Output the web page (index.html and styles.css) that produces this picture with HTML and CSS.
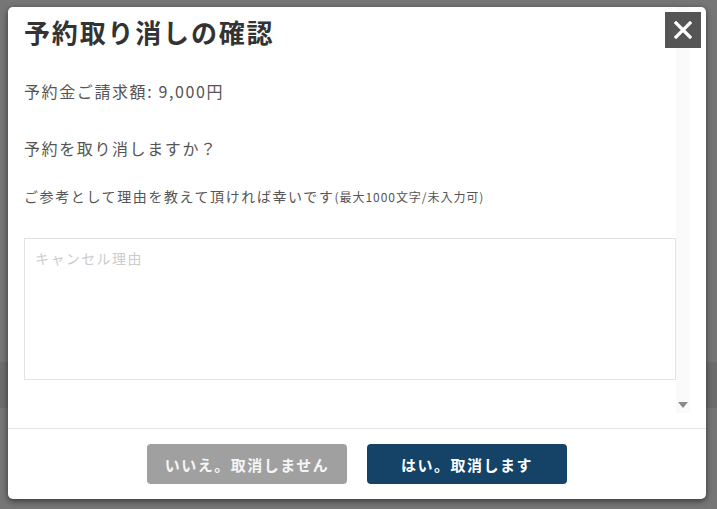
FILE: index.html
```html
<!DOCTYPE html>
<html lang="ja">
<head>
<meta charset="utf-8">
<title>予約取り消しの確認</title>
<link rel="stylesheet" href="styles.css">
</head>
<body>
<div class="page">
  <div class="band"></div>
</div>
<div class="modal">
  <div class="body">
    <div class="scroll">
      <div class="content">
        <h2 class="title">予約取り消しの確認</h2>
        <p class="amount">予約金ご請求額: 9,000円</p>
        <p class="question">予約を取り消しますか？</p>
        <p class="note">ご参考として理由を教えて頂ければ幸いです<span class="small">(最大1000文字/未入力可)</span></p>
        <textarea class="reason" placeholder="キャンセル理由"></textarea>
      </div>
      <div class="bar"><span class="arrow"></span></div>
    </div>
  </div>
  <div class="footer">
    <button class="btn btn-no">いいえ。取消しません</button>
    <button class="btn btn-yes">はい。取消します</button>
  </div>
  <button class="close" aria-label="閉じる">
    <svg width="18" height="18" viewBox="0 0 18 18"><path d="M2 2 L16 16 M16 2 L2 16" stroke="#fff" stroke-width="3.2" stroke-linecap="square"/></svg>
  </button>
</div>
</body>
</html>
```

FILE: styles.css
```css
* { box-sizing: border-box; }
html, body { margin: 0; padding: 0; }
body {
  width: 717px;
  height: 509px;
  overflow: hidden;
  background: #767676;
  font-family: "Noto Sans CJK JP", "Noto Sans", sans-serif;
  position: relative;
}
.page {
  height: 509px;
  display: flex;
  flex-direction: column;
  padding-top: 362px;
}
.band {
  height: 46px;
  background: #6d6d6d;
}
.modal {
  position: absolute;
  left: 8px;
  top: 7px;
  width: 698px;
  height: 492px;
  background: #fff;
  border-radius: 5px;
  box-shadow: 0 2px 6px rgba(0,0,0,0.55);
  display: flex;
  flex-direction: column;
}
.body {
  height: 421px;
  padding: 0 16px 15px 16px;
}
.scroll {
  height: 406px;
  display: flex;
}
.content {
  flex: 1;
  display: flex;
  flex-direction: column;
  color: #555;
  letter-spacing: 0.1em;
}
.title {
  margin: 7px 0 0 0;
  font-size: 26px;
  line-height: 36px;
  font-weight: bold;
  letter-spacing: 0.07em;
  color: #333;
}
.amount {
  margin: 29px 0 0 0;
  font-size: 16px;
  line-height: 24px;
  letter-spacing: 0.1em;
}
.question {
  margin: 33px 0 0 0;
  font-size: 16px;
  line-height: 24px;
}
.note {
  margin: 26px 0 0 0;
  font-size: 14px;
  line-height: 20px;
}
.small { font-size: 12px; letter-spacing: 0.08em; }
.reason {
  margin-top: 31px;
  width: 100%;
  height: 142px;
  border: 1px solid #e3e3e3;
  padding: 9px 10px;
  font-family: "Noto Sans CJK JP", sans-serif;
  font-size: 14px;
  line-height: 20px;
  letter-spacing: 0.1em;
  resize: none;
  outline: none;
  color: #555;
}
.reason::placeholder { color: #ccc; }
.bar {
  width: 14px;
  background: #fafafa;
  display: flex;
  flex-direction: column;
  justify-content: flex-end;
  align-items: center;
  padding-bottom: 5px;
}
.arrow {
  width: 0;
  height: 0;
  border-left: 5px solid transparent;
  border-right: 5px solid transparent;
  border-top: 6px solid #8a8a8a;
}
.footer {
  flex: 1;
  border-top: 1px solid #e5e5e5;
  display: flex;
  justify-content: center;
  align-items: flex-start;
  gap: 20px;
  padding-top: 15px;
}
.btn {
  width: 200px;
  height: 40px;
  border: none;
  border-radius: 4px;
  color: #fff;
  font-family: "Noto Sans CJK JP", sans-serif;
  font-weight: bold;
  font-size: 15px;
  letter-spacing: 0.1em;
  padding: 0;
}
.btn-no { background: #a0a0a0; color: #f5f5f5; }
.btn-yes { background: #154368; }
.close {
  position: absolute;
  top: 5px;
  right: 5px;
  width: 36px;
  height: 36px;
  border: none;
  padding: 0;
  background: #555;
  display: flex;
  align-items: center;
  justify-content: center;
}
```
